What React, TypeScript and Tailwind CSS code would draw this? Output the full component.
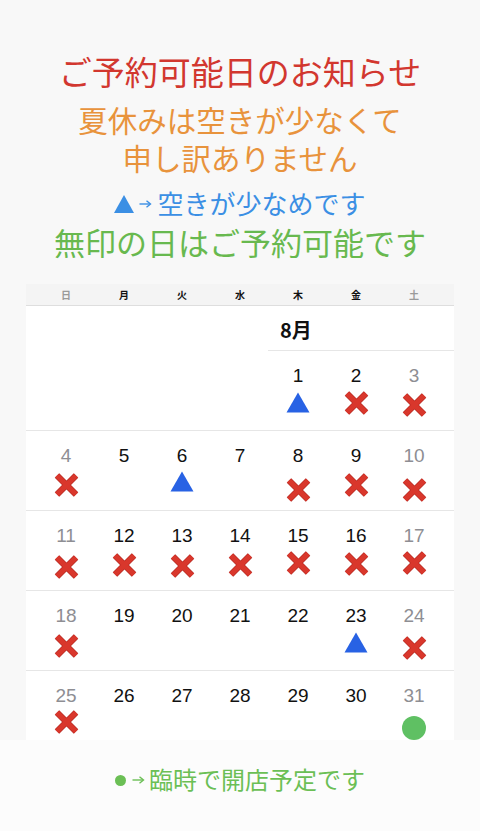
import React from "react";

type Mark = "x" | "tri" | "dot" | null;
type Cell = { d: number; m: Mark; mt: number; wk: boolean } | null;

const MT: Record<number, string> = {
  0: "mt-0",
  1: "mt-[1px]",
  2: "mt-[2px]",
  3: "mt-[3px]",
  4: "mt-[4px]",
  5: "mt-[5px]",
  6: "mt-[6px]",
  7: "mt-[7px]",
  8: "mt-[8px]",
  9: "mt-[9px]",
};

const marks: Record<number, [Mark, number]> = {
  1: ["tri", 4],
  2: ["x", 2],
  3: ["x", 4],
  4: ["x", 4],
  6: ["tri", 3],
  8: ["x", 9],
  9: ["x", 4],
  10: ["x", 9],
  11: ["x", 6],
  12: ["x", 4],
  13: ["x", 5],
  14: ["x", 4],
  15: ["x", 2],
  16: ["x", 3],
  17: ["x", 2],
  18: ["x", 5],
  23: ["tri", 4],
  24: ["x", 7],
  25: ["x", 1],
  31: ["dot", 8],
};

function buildRows(): Cell[][] {
  const cells: Cell[] = [null, null, null, null];
  for (let d = 1; d <= 31; d++) {
    const idx = cells.length % 7;
    const mk = marks[d];
    cells.push({ d, m: mk ? mk[0] : null, mt: mk ? mk[1] : 0, wk: idx === 0 || idx === 6 });
  }
  const rows: Cell[][] = [];
  for (let i = 0; i < cells.length; i += 7) rows.push(cells.slice(i, i + 7));
  return rows;
}

const XMark = ({ mt }: { mt: number }) => (
  <svg width="27" height="26" viewBox="0 0 27 26" className={MT[mt]}>
    <line x1="4" y1="3.5" x2="23" y2="22.5" stroke="#b52a22" strokeWidth="6.4" />
    <line x1="23" y1="3.5" x2="4" y2="22.5" stroke="#b52a22" strokeWidth="6.4" />
    <line x1="4" y1="3.5" x2="23" y2="22.5" stroke="#d9372c" strokeWidth="5.2" />
    <line x1="23" y1="3.5" x2="4" y2="22.5" stroke="#d9372c" strokeWidth="5.2" />
  </svg>
);

const TriMark = ({ mt }: { mt: number }) => (
  <svg width="24" height="21" viewBox="0 0 24 21" className={MT[mt]}>
    <polygon points="12,0.5 23.5,20.5 0.5,20.5" fill="#2862e4" />
  </svg>
);

const DotMark = ({ mt }: { mt: number }) => (
  <div className={`w-[24px] h-[24px] rounded-full bg-[#5fc063] ${MT[mt]}`} />
);

const weekdays = [
  { t: "日", c: "text-[#9a9a9a]" },
  { t: "月", c: "text-[#111]" },
  { t: "火", c: "text-[#111]" },
  { t: "水", c: "text-[#111]" },
  { t: "木", c: "text-[#111]" },
  { t: "金", c: "text-[#111]" },
  { t: "土", c: "text-[#9a9a9a]" },
];

const jp = { fontFamily: '"Noto Sans CJK JP", "Noto Sans", sans-serif' };

const Arrow = ({ color }: { color: string }) => (
  <svg width="13" height="10" viewBox="0 0 13 10">
    <line x1="0.5" y1="5" x2="11" y2="5" stroke={color} strokeWidth="1.4" />
    <polyline points="7.5,1.8 11.5,5 7.5,8.2" fill="none" stroke={color} strokeWidth="1.4" />
  </svg>
);

export default function App() {
  const rows = buildRows();
  return (
    <div className="min-h-[831px] w-[480px] bg-[#f8f8f8] flex flex-col" style={jp}>
      <div className="flex flex-col items-center">
        <div className="mt-[53px] h-[36px] leading-[36px] text-[33px] text-[#d2372f] whitespace-nowrap">
          ご予約可能日のお知らせ
        </div>
        <div className="mt-[12px] h-[36px] leading-[36px] text-[29.5px] text-[#e8933c] whitespace-nowrap">
          夏休みは空きが少なくて
        </div>
        <div className="mt-[2px] h-[36px] leading-[36px] text-[29.5px] text-[#e8933c] whitespace-nowrap">
          申し訳ありません
        </div>
        <div className="mt-[10px] h-[36px] flex items-center text-[#3b8fe4] whitespace-nowrap">
          <svg width="20" height="18" viewBox="0 0 20 18" className="mt-[2px]">
            <polygon points="10,0 20,18 0,18" fill="#3b8fe4" />
          </svg>
          <span className="ml-[5px] mt-[2px] flex">
            <Arrow color="#3b8fe4" />
          </span>
          <span className="ml-[5px] text-[26px] leading-[36px]">空きが少なめです</span>
        </div>
        <div className="mt-[3px] h-[36px] leading-[36px] text-[31px] text-[#68b94f] whitespace-nowrap">
          無印の日はご予約可能です
        </div>
      </div>

      <div className="mt-[24px] mx-auto w-[428px] bg-white">
        <div className="h-[22px] bg-[#f4f4f4] border-b border-[#dedede] grid grid-cols-7 px-[11px] items-center">
          {weekdays.map((w) => (
            <div key={w.t} className={`text-center text-[10px] font-bold leading-[21px] ${w.c}`}>
              {w.t}
            </div>
          ))}
        </div>
        <div className="h-[45px] pl-[242px]">
          <div className="h-full border-b border-[#e6e6e6] pl-[12px] flex items-center">
            <span className="text-[20px] font-bold text-[#111] leading-none mt-[4px]">8月</span>
          </div>
        </div>
        {rows.map((row, ri) => (
          <div
            key={ri}
            className={
              ri === rows.length - 1
                ? "h-[69px] grid grid-cols-7 px-[11px]"
                : "h-[80px] grid grid-cols-7 px-[11px] border-b border-[#e6e6e6]"
            }
          >
            {Array.from({ length: 7 }).map((_, ci) => {
              const c = row[ci];
              if (!c) return <div key={ci} />;
              return (
                <div key={ci} className="flex flex-col items-center pt-[13px]">
                  <div
                    className={`text-[19px] leading-[24px] ${c.wk ? "text-[#8e8e93]" : "text-[#111]"}`}
                    style={{ fontFamily: '"Liberation Sans", Arial, sans-serif' }}
                  >
                    {c.d}
                  </div>
                  {c.m === "x" && <XMark mt={c.mt} />}
                  {c.m === "tri" && <TriMark mt={c.mt} />}
                  {c.m === "dot" && <DotMark mt={c.mt} />}
                </div>
              );
            })}
          </div>
        ))}
      </div>

      <div className="flex-1 bg-[#fcfcfc] flex flex-col items-center">
        <div className="mt-[21px] h-[36px] flex items-center text-[#6bbf55] whitespace-nowrap">
          <div className="w-[11px] h-[11px] rounded-full bg-[#6bbf55] mt-[2px]" />
          <span className="ml-[6px] mt-[2px] flex">
            <Arrow color="#6bbf55" />
          </span>
          <span className="ml-[4px] text-[24px] leading-[36px]">臨時で開店予定です</span>
        </div>
      </div>
    </div>
  );
}
